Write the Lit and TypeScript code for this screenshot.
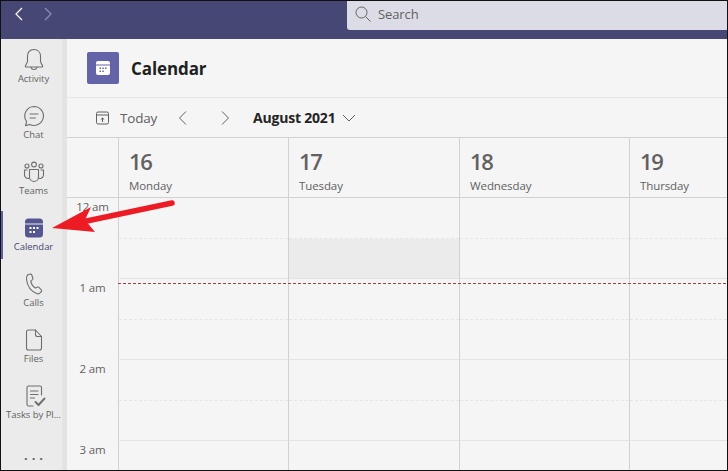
import { LitElement, html, css, svg } from "lit";
import { customElement } from "lit/decorators.js";

const I = (body: unknown) => html`<svg class="ic" width="28" height="28" viewBox="0 0 28 28" fill="none" stroke="#6e6e6e" stroke-width="1.100" stroke-linecap="round" stroke-linejoin="round">${body}</svg>`;

const rail = [
  { label: "Activity", icon: I(svg`<path d="M14 3.500c-4.200 0-6.500 3-6.500 7v5.200L5.400 20c-.2.500.1 1 .7 1h15.800c.6 0 .9-.5.7-1l-2.100-4.300V10.500c0-4-2.300-7-6.500-7z"/><path d="M11 21.300c.4 1.500 1.500 2.200 3 2.200s2.600-.7 3-2.200"/>`) },
  { label: "Chat", icon: I(svg`<path d="M14 4.500a9.500 9.500 0 1 1-4.300 18l-4.200 1.100 1.100-4A9.500 9.500 0 0 1 14 4.500z"/><path d="M10 12h8M10 16h5.500"/>`) },
  { label: "Teams", icon: I(svg`<circle cx="14" cy="6.500" r="2.400"/><circle cx="7" cy="8" r="2"/><circle cx="21" cy="8" r="2"/><path d="M9.500 11.500h9v7.500a4.500 4.500 0 0 1-9 0z"/><path d="M7 12H4.500v5a3.500 3.500 0 0 0 4.500 3.300M21 12h2.500v5a3.500 3.500 0 0 1-4.500 3.300"/>`) },
  { label: "Calendar", active: true, icon: html`<svg class="ic" width="28" height="28" viewBox="0 0 28 28"><path fill="#54568f" d="M8.500 4.500h11A3.500 3.500 0 0 1 23 8v1.500H5V8a3.500 3.500 0 0 1 3.500-3.500zM5 10.500h18V20a3.500 3.500 0 0 1-3.500 3.500h-11A3.500 3.500 0 0 1 5 20z"/><g fill="#fff"><rect x="9.500" y="13" width="2" height="2"/><rect x="13" y="13" width="2" height="2"/><rect x="16.500" y="13" width="2" height="2"/><rect x="9.500" y="17" width="2" height="2"/><rect x="13" y="17" width="2" height="2"/></g></svg>` },
  { label: "Calls", icon: I(svg`<path d="M8 4.500 10.500 4c.6 0 1 .3 1.200.8l1.200 3.400c.2.500 0 1-.4 1.400l-1.800 1.500c.6 2.800 2.300 5.500 4.700 7l2.200-1c.5-.2 1-.1 1.400.3l2.400 2.600c.4.500.4 1.100 0 1.500l-1.700 1.700c-.8.700-2 .9-3 .4C11 21.300 7.300 15.800 6.500 9.500 6.300 7.500 6.800 5.500 8 4.500z"/>`) },
  { label: "Files", icon: I(svg`<path d="M8.500 4h7l6 6.500V22a2 2 0 0 1-2 2h-11a2 2 0 0 1-2-2V6a2 2 0 0 1 2-2z"/><path d="M15.500 4v4.500a2 2 0 0 0 2 2h4"/>`) },
  { label: "Tasks by Pl...", icon: I(svg`<path d="M21.500 13V5.500A1.500 1.500 0 0 0 20 4H8.500A1.500 1.500 0 0 0 7 5.500v17A1.500 1.500 0 0 0 8.500 24H13"/><path d="M10.500 9h7.500M10.500 12.500h7.500M10.500 16h4"/><path d="m15.500 20 3 3 6-6.500" stroke-width="1.900"/>`) },
];

const days = [
  ["16", "Monday"], ["17", "Tuesday"], ["18", "Wednesday"], ["19", "Thursday"],
];
const hours = ["12 am", "1 am", "2 am", "3 am"];

@customElement("app-root")
export class AppRoot extends LitElement {
  static styles = css`
    :host { display: block; width: 728px; height: 471px; overflow: hidden; position: relative; background: #f5f5f5; font-family: "Open Sans", "Noto Sans", sans-serif; }
    .frame { box-sizing: border-box; width: 728px; height: 471px; border: 1px solid #111; display: flex; flex-direction: column; }
    .top { height: 38px; flex: none; background: #464775; display: flex; align-items: flex-start; }
    .nav { display: flex; gap: 13px; padding: 6px 0 0 10px; width: 346px; box-sizing: border-box; flex: none; }
    .search { flex: 1; height: 29px; background: #dcdce6; border-bottom-left-radius: 3px; display: flex; align-items: center; gap: 7px; padding: 0 0 4px 8px; box-sizing: border-box; color: #616161; font-size: 13px; letter-spacing: -.1px; }
    .body { flex: 1; display: flex; min-height: 0; }
    .rail { width: 66px; flex: none; background: linear-gradient(to right, #ebebeb 61px, #e3e3e3 61px); display: flex; flex-direction: column; position: relative; }
    .item { height: 56px; display: flex; flex-direction: column; align-items: center; font-size: 9.500px; color: #616161; position: relative; box-sizing: border-box; padding: 7px 1px 0 0; line-height: 12px; white-space: nowrap; letter-spacing: -.05px; }
    .item .ic { margin-bottom: -1px; }
    .item.active { color: #464775; }
    .item.active::before { content: ""; position: absolute; left: 0; top: 4px; width: 2px; height: 48px; background: #5b5fa0; }
    .more { font-size: 13px; color: #616161; text-align: center; letter-spacing: 4px; padding-left: 3px; font-weight: 700; line-height: 14px; padding-top: 17px; }
    .main { flex: 1; min-width: 0; display: flex; flex-direction: column; }
    .head { height: 59px; flex: none; display: flex; align-items: center; gap: 12px; padding-left: 20px; box-sizing: border-box; border-bottom: 1px solid #e6e6e6; }
    .logo { width: 32px; height: 32px; background: #6264a7; border-radius: 2px; display: flex; align-items: center; justify-content: center; }
    .title { font-size: 17px; font-weight: 700; color: #1f1f1f; letter-spacing: -.1px; }
    .tools { height: 40px; flex: none; display: flex; align-items: center; box-sizing: border-box; border-bottom: 1px solid #d1d1d1; padding-left: 29px; color: #616161; }
    .today { font-size: 13.500px; margin-left: 11px; letter-spacing: -.2px; width: 46px; }
    .prev { margin-left: 11px; }
    .next { margin-left: 32px; }
    .month { font-size: 14px; font-weight: 700; color: #242424; margin-left: 22px; letter-spacing: -.2px; }
    .chev { margin-left: 7px; }
    .cal { flex: 1; display: grid; grid-template-columns: 51px 170px 171px 170px 1fr; grid-template-rows: 60px repeat(4, 81px); min-height: 0; overflow: hidden; position: relative; }
    .day { border-left: 1px solid #d1d1d1; border-bottom: 1px solid #d1d1d1; padding: 7px 0 0 10px; box-sizing: border-box; color: #616161; }
    .corner { border-bottom: 1px solid #d1d1d1; }
    .num { font-size: 22px; line-height: 32px; font-weight: 600; letter-spacing: -1.300px; }
    .dn { font-size: 11.500px; line-height: 16px; letter-spacing: -.1px; margin-top: 1px; }
    .hour { font-size: 11.500px; color: #616161; text-align: center; line-height: 16px; padding-top: 1px; letter-spacing: -.1px; }
    .cell { border-left: 1px solid #d1d1d1; border-bottom: 1px solid #e3e3e3; box-sizing: border-box; display: grid; grid-template-rows: 41px 1fr; }
    .half { border-bottom: 1px dashed #e6e6e6; }
    .busy { background: #ebebeb; }
    .now { position: absolute; left: 51px; right: 0; top: 145px; height: 1px; background: repeating-linear-gradient(to right, #8f4743 0 3px, transparent 3px 5px); }
    .arrow { position: absolute; left: 0; top: 0; pointer-events: none; }
  `;

  render() {
    return html`
      <div class="frame">
        <div class="top">
          <div class="nav">
            <svg width="16" height="16" viewBox="0 0 16 16" fill="none" stroke="#fff" stroke-width="1.200"><path d="M11 1 5 7l6 6"/></svg>
            <svg width="16" height="16" viewBox="0 0 16 16" fill="none" stroke="#8e8fb5" stroke-width="1.200"><path d="m5 1 6 6-6 6"/></svg>
          </div>
          <div class="search">
            <svg width="16" height="16" viewBox="0 0 16 16" fill="none" stroke="#616161" stroke-width="1"><circle cx="6.500" cy="6.500" r="5.500"/><path d="m10.500 10.500 5 5"/></svg>
            <span>Search</span>
          </div>
        </div>
        <div class="body">
          <div class="rail">
            ${rail.map((r) => html`<div class="item ${r.active ? "active" : ""}">${r.icon}<span>${r.label}</span></div>`)}
            <div class="more">...</div>
          </div>
          <div class="main">
            <div class="head">
              <div class="logo">
                <svg width="14" height="14" viewBox="0 0 14 14"><path fill="#fff" d="M2 0h10a2 2 0 0 1 2 2v1.500H0V2a2 2 0 0 1 2-2zM0 4.500h14V12a2 2 0 0 1-2 2H2a2 2 0 0 1-2-2z"/><g fill="#6264a7"><rect x="3.500" y="6.500" width="1.500" height="1.500"/><rect x="6.300" y="6.500" width="1.500" height="1.500"/><rect x="9" y="6.500" width="1.500" height="1.500"/><rect x="3.500" y="9.500" width="1.500" height="1.500"/><rect x="6.300" y="9.500" width="1.500" height="1.500"/></g></svg>
              </div>
              <div class="title">Calendar</div>
            </div>
            <div class="tools">
              <svg width="13" height="14" viewBox="0 0 13 14" fill="none" stroke="#616161"><rect x=".5" y="1" width="12" height="12" rx="1.500"/><path d="M.5 4h12M6.500 11V7M4.800 8.500 6.500 7l1.700 1.500"/></svg>
              <span class="today">Today</span>
              <svg class="prev" width="11" height="16" viewBox="0 0 11 16" fill="none" stroke="#616161"><path d="M9 1.500 2.500 8 9 14.500"/></svg>
              <svg class="next" width="11" height="16" viewBox="0 0 11 16" fill="none" stroke="#616161"><path d="M2 1.500 8.500 8 2 14.500"/></svg>
              <span class="month">August 2021</span>
              <svg class="chev" width="14" height="8" viewBox="0 0 14 8" fill="none" stroke="#616161"><path d="M1 1l6 6 6-6"/></svg>
            </div>
            <div class="cal">
              <div class="corner"></div>
              ${days.map((d) => html`<div class="day"><div class="num">${d[0]}</div><div class="dn">${d[1]}</div></div>`)}
              ${hours.map((h, i) => html`
                <div class="hour"><span>${h}</span></div>
                ${days.map((_, c) => html`<div class="cell"><div class="half"></div><div class="${i === 0 && c === 1 ? "busy" : ""}"></div></div>`)}
              `)}
              <div class="now"></div>
            </div>
          </div>
        </div>
      </div>
      <svg class="arrow" width="728" height="471" viewBox="0 0 728 471">
        <path d="M172 203 82 222" stroke="#ed1c24" stroke-width="5.500" stroke-linecap="round" fill="none"/>
        <path d="M52 228 91 207 85 220 95 232z" fill="#ed1c24"/>
      </svg>
    `;
  }
}
